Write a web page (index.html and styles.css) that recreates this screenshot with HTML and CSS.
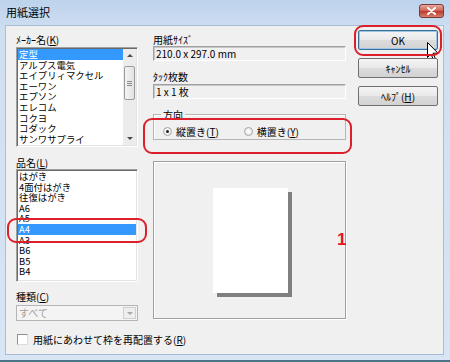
FILE: index.html
```html
<!DOCTYPE html>
<html lang="ja">
<head>
    <meta charset="UTF-8">
    <meta name="viewport" content="width=device-width, initial-scale=1.0">
    <title>用紙選択</title>
    <link rel="stylesheet" href="styles.css">
</head>
<body>
    <div class="window">
        <div class="titlebar">
            <span class="title">用紙選択</span>
            <span class="close">
                <svg width="9" height="8" viewBox="0 0 9 8"><path d="M1 1 L8 7 M8 1 L1 7" stroke="#fff" stroke-width="2" stroke-linecap="round"/></svg>
            </span>
        </div>
        <div class="client">
            <div class="panes">
                <div class="col col-left">
                    <div class="lbl">ﾒｰｶｰ名(<u>K</u>)</div>
                    <div class="listbox maker">
                        <ul class="items">
                            <li class="sel">定型</li>
                            <li>アルプス電気</li>
                            <li>エイプリィマクセル</li>
                            <li>エーワン</li>
                            <li>エプソン</li>
                            <li>エレコム</li>
                            <li>コクヨ</li>
                            <li>コダック</li>
                            <li>サンワサプライ</li>
                        </ul>
                        <div class="vscroll">
                            <div class="sb-btn"><span class="arrow-up"></span></div>
                            <div class="sb-track"><div class="sb-thumb"><span class="grip"></span></div></div>
                            <div class="sb-btn"><span class="arrow-down"></span></div>
                        </div>
                    </div>

                    <div class="lbl gap">品名(<u>L</u>)</div>
                    <div class="listbox product">
                        <ul class="items">
                            <li>はがき</li>
                            <li>4面付はがき</li>
                            <li>往復はがき</li>
                            <li>A6</li>
                            <li>A5</li>
                            <li class="sel ring ring-a4">A4</li>
                            <li>A3</li>
                            <li>B6</li>
                            <li>B5</li>
                            <li>B4</li>
                        </ul>
                    </div>

                    <div class="lbl gap-sm">種類(<u>C</u>)</div>
                    <div class="combo disabled">
                        <span class="combo-text">すべて</span>
                        <span class="combo-btn"><span class="arrow-down grey"></span></span>
                    </div>
                </div>

                <div class="col col-mid">
                    <div class="lbl">用紙ｻｲｽﾞ</div>
                    <div class="field">210.0 x 297.0 mm</div>
                    <div class="lbl gap">ﾀｯｸ枚数</div>
                    <div class="field tight">1 x 1 枚</div>

                    <fieldset class="group ring ring-dir">
                        <legend>方向</legend>
                        <div class="radios">
                            <span class="radio checked"></span><span class="radio-text">縦置き(<u>T</u>)</span>
                            <span class="radio second"></span><span class="radio-text">横置き(<u>Y</u>)</span>
                        </div>
                    </fieldset>

                    <div class="preview">
                        <div class="paper"></div>
                        <span class="mark">1</span>
                    </div>
                </div>

                <div class="col col-right">
                    <div class="btn default ring ring-ok">OK
                        <svg class="cursor" width="12" height="19" viewBox="0 0 12 19">
                            <path d="M0.5 0.5 L0.5 15.5 L4 12 L6.5 18 L8.5 17 L6 11.2 L11 11.2 Z" fill="#fff" stroke="#000" stroke-width="1" stroke-linejoin="round"/>
                        </svg>
                    </div>
                    <div class="btn">ｷｬﾝｾﾙ</div>
                    <div class="btn">ﾍﾙﾌﾟ(<u>H</u>)</div>
                </div>
            </div>

            <div class="checkrow">
                <span class="checkbox"></span>
                <span>用紙にあわせて枠を再配置する(<u>R</u>)</span>
            </div>
        </div>
    </div>
</body>
</html>
```

FILE: styles.css
```css
* {
    box-sizing: border-box;
}

body {
    margin: 0;
    font-family: "Noto Sans CJK JP", "Liberation Sans", sans-serif;
    font-size: 10px;
    color: #000;
    background: #fff;
}

u {
    text-decoration-thickness: 1px;
    text-underline-offset: 1px;
}

.window {
    width: 450px;
    height: 362px;
    display: flex;
    flex-direction: column;
    padding: 0 6px 5px 5px;
    background: linear-gradient(#bdd2ec, #cfdff2 30px, #d7e5f5);
    border-bottom: 2px solid #4f7386;
}

.titlebar {
    height: 25px;
    display: flex;
    align-items: center;
    justify-content: space-between;
    padding-left: 1px;
}

.title {
    font-size: 11px;
    line-height: 14px;
    margin-top: -1px;
}

.close {
    width: 25px;
    height: 14px;
    margin-top: -4px;
    border: 1px solid #7a3a35;
    border-radius: 3px;
    background: linear-gradient(#e8a89c, #d0665a 45%, #bd3b2d 55%, #d8806f);
    display: flex;
    align-items: center;
    justify-content: center;
}

.client {
    flex: 1;
    background: #f0f0f0;
    border: 1px solid #a8bdd6;
    padding: 4px 0 0 10px;
}

.panes {
    display: flex;
}

.col {
    display: flex;
    flex-direction: column;
}

.col-left {
    width: 122px;
    padding-top: 3px;
}

.col-mid {
    width: 193px;
    margin-left: 15px;
    padding-top: 3px;
}

.col-right {
    width: 80px;
    margin-left: 12px;
}

.lbl {
    height: 13px;
    line-height: 13px;
    white-space: nowrap;
}

.lbl.gap {
    margin-top: 9px;
}

.lbl.gap-sm {
    margin-top: 8px;
}

/* listboxes */
.listbox {
    display: flex;
    background: #fff;
    border: 1px solid;
    border-color: #a0a0a0 #fff #fff #a0a0a0;
    box-shadow: inset 1px 1px 0 #696969, inset -1px -1px 0 #e3e3e3;
    padding: 1px;
}

.listbox.maker {
    margin-top: 1px;
    height: 100px;
}

.listbox.product {
    height: 113px;
}

.items {
    list-style: none;
    margin: 0;
    padding: 0;
    flex: 1;
    min-width: 0;
}

.maker .items {
    overflow: hidden;
}

.items li {
    font-size: 9.4px;
    line-height: 10.6px;
    height: 10.6px;
    padding-left: 1px;
    white-space: nowrap;
}

.items li.sel {
    background: #3399ff;
    color: #fff;
}

.vscroll {
    width: 13px;
    display: flex;
    flex-direction: column;
    background: #ececec;
}

.sb-btn {
    height: 13px;
    display: flex;
    align-items: center;
    justify-content: center;
}

.sb-track {
    flex: 1;
    padding: 4px 0 0 1px;
}

.sb-thumb {
    width: 11px;
    height: 34px;
    border: 1px solid #9b9b9b;
    border-radius: 2px;
    background: linear-gradient(90deg, #f4f4f4, #e2e2e2);
    display: flex;
    align-items: center;
    justify-content: center;
}

.grip {
    width: 5px;
    height: 5px;
    border-top: 1px solid #8a8a8a;
    border-bottom: 1px solid #8a8a8a;
    background: linear-gradient(#8a8a8a, #8a8a8a) center / 5px 1px no-repeat;
}

.arrow-up,
.arrow-down {
    width: 0;
    height: 0;
    border-left: 3px solid transparent;
    border-right: 3px solid transparent;
}

.arrow-up {
    border-bottom: 3px solid #4a4a4a;
}

.arrow-down {
    border-top: 3px solid #4a4a4a;
}

.arrow-down.grey {
    border-top-color: #a8a8a8;
}

/* combo */
.combo {
    margin-top: 2px;
    height: 16px;
    display: flex;
    align-items: center;
    border: 1px solid #b5b5b5;
    background: #f4f4f4;
    padding: 1px;
}

.combo-text {
    flex: 1;
    padding-left: 1px;
    color: #a0a0a0;
    line-height: 12px;
}

.combo-btn {
    width: 13px;
    height: 12px;
    border: 1px solid #d0d0d0;
    background: #eeeeee;
    display: flex;
    align-items: center;
    justify-content: center;
}

/* read-only fields */
.field {
    height: 15px;
    line-height: 13px;
    padding-left: 2px;
    border: 1px solid;
    border-color: #a0a0a0 #fff #fff #a0a0a0;
    box-shadow: inset 1px 1px 0 #c8c8c8;
    white-space: nowrap;
}

.field.tight {
    margin-top: 1px;
}

/* direction group */
.group {
    margin: 9px 0 0;
    padding: 0 0 0 9px;
    min-width: 0;
    border: 1px solid #b5b5b5;
    box-shadow: inset 1px 1px 0 #fff;
}

.group legend {
    margin-left: -2px;
    padding: 0 2px;
    line-height: 13px;
    height: 13px;
}

.radios {
    height: 18px;
    padding-top: 2px;
    display: flex;
    align-items: center;
}

.radio {
    width: 9px;
    height: 9px;
    border: 1px solid #a5a5a5;
    border-radius: 50%;
    background: radial-gradient(#ffffff, #e4e4e4);
    display: flex;
    align-items: center;
    justify-content: center;
    margin-right: 4px;
}

.radio.checked::after {
    content: "";
    width: 3px;
    height: 3px;
    border-radius: 50%;
    background: #1e1e1e;
}

.radio.second {
    margin-left: 25px;
}

.radio-text {
    white-space: nowrap;
    line-height: 13px;
}

/* preview */
.preview {
    position: relative;
    margin-top: 21px;
    height: 158px;
    border: 1px solid #a0a0a0;
    box-shadow: inset 1px 1px 0 #fff, 1px 1px 0 #fff;
    display: flex;
    align-items: center;
    justify-content: center;
}

.paper {
    width: 75px;
    height: 105px;
    margin-left: 1px;
    background: #fff;
    box-shadow: 4px 4px 0 #7f7f7f;
}

.mark {
    position: absolute;
    left: 183px;
    top: 69px;
    font-family: "Liberation Sans", Arial, sans-serif;
    font-weight: bold;
    font-size: 17px;
    line-height: 17px;
    color: #e5131d;
}

/* buttons */
.btn {
    position: relative;
    height: 20px;
    margin-top: 8px;
    border: 1px solid #707070;
    border-radius: 2px;
    background: linear-gradient(#f4f4f4, #e9e9e9 50%, #dcdcdc 50%, #d2d2d2);
    display: flex;
    align-items: center;
    justify-content: center;
    line-height: 13px;
    white-space: nowrap;
}

.btn.default {
    margin-top: 0;
    border-color: #3c6f98;
    box-shadow: inset 0 0 0 1px #9cc6e6;
}

.cursor {
    position: absolute;
    left: 68px;
    top: 11px;
}

/* annotation rings */
.ring {
    position: relative;
}

.ring::after {
    content: "";
    position: absolute;
    border: 2px solid #dc1f2a;
    border-radius: 9px;
    pointer-events: none;
}

.ring-ok::after {
    inset: -6px -5px -7px -5px;
}

.ring-dir::after {
    inset: -3px -7px -15px -11px;
}

.ring-a4::after {
    inset: -6px -11px -8px -11px;
}

/* bottom checkbox */
.checkrow {
    margin-top: 12px;
    display: flex;
    align-items: center;
    height: 13px;
    line-height: 13px;
    padding-left: 1px;
}

.checkbox {
    width: 11px;
    height: 11px;
    margin-right: 5px;
    border: 1px solid;
    border-color: #8e8f8f #dcdcdc #dcdcdc #8e8f8f;
    background: #fff;
}
```
